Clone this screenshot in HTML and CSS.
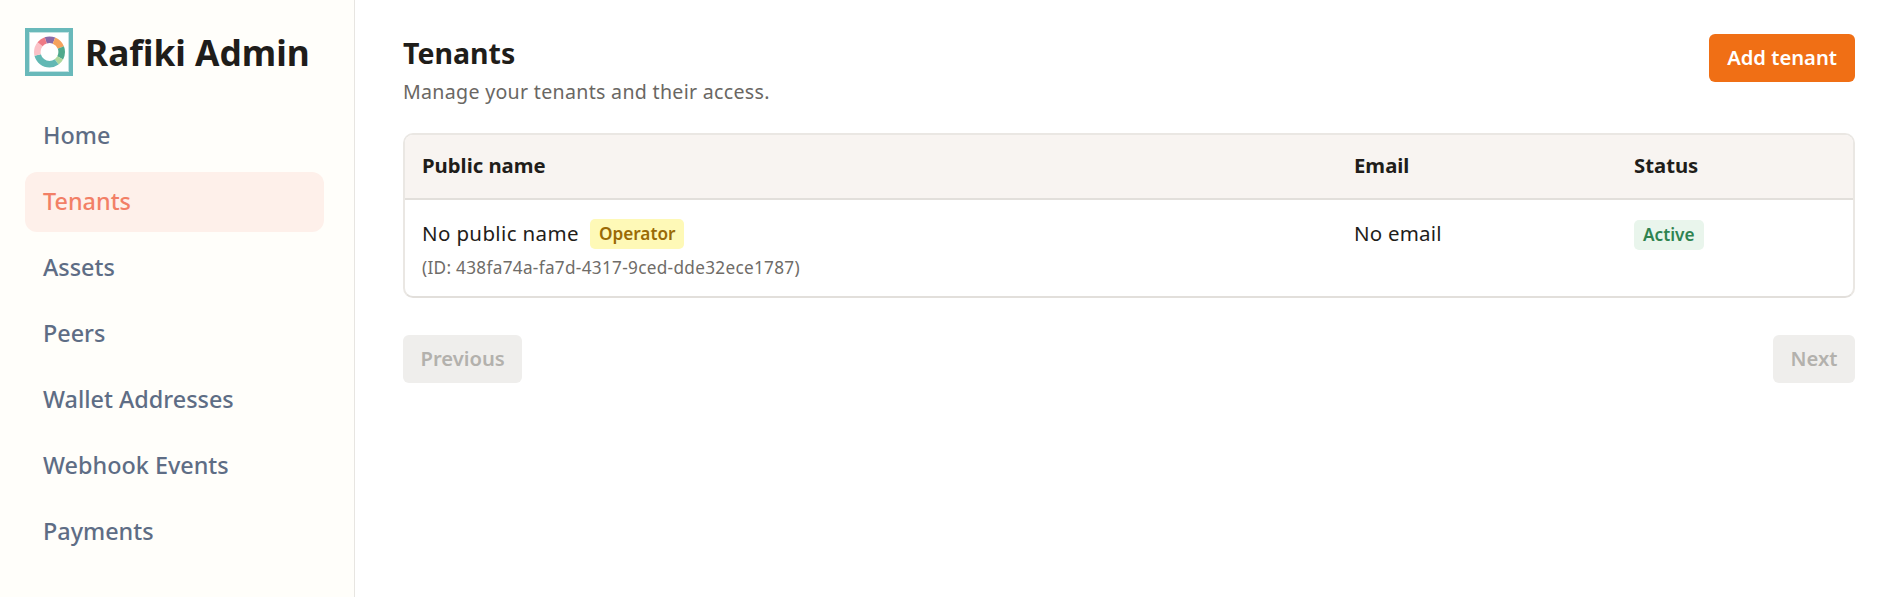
FILE: index.html
```html
<!DOCTYPE html>
<html lang="en">
<head>
<meta charset="utf-8">
<title>Rafiki Admin</title>
<link rel="stylesheet" href="styles.css">
</head>
<body>
<div class="app">
  <aside class="sidebar">
    <div class="brand">
      <svg class="logo" viewBox="0 0 48 48" aria-hidden="true">
        <rect x="2" y="2" width="44" height="44" fill="#fff" stroke="#69b9ba" stroke-width="4"/>
        <rect x="4.5" y="4.5" width="39" height="39" fill="none" stroke="#c4e3e3" stroke-width="1"/>
        <g fill="none" stroke-width="6.6" transform="rotate(-90 24.5 24)">
          <circle cx="24.5" cy="24" r="12.2" stroke="#8a6aa8" pathLength="100" stroke-dasharray="11 89" stroke-dashoffset="5"/>
          <circle cx="24.5" cy="24" r="12.2" stroke="#f5a25d" pathLength="100" stroke-dasharray="13 87" stroke-dashoffset="-6"/>
          <circle cx="24.5" cy="24" r="12.2" stroke="#4fa98c" pathLength="100" stroke-dasharray="14 86" stroke-dashoffset="-19"/>
          <circle cx="24.5" cy="24" r="12.2" stroke="#aed79c" pathLength="100" stroke-dasharray="7 93" stroke-dashoffset="-33"/>
          <circle cx="24.5" cy="24" r="12.2" stroke="#62b8b4" pathLength="100" stroke-dasharray="31 69" stroke-dashoffset="-40"/>
          <circle cx="24.5" cy="24" r="12.2" stroke="#fbc1c7" pathLength="100" stroke-dasharray="15 85" stroke-dashoffset="-71"/>
          <circle cx="24.5" cy="24" r="12.2" stroke="#ee7b86" pathLength="100" stroke-dasharray="9 91" stroke-dashoffset="-86"/>
        </g>
      </svg>
      <span class="brand-name">Rafiki Admin</span>
    </div>
    <nav class="nav">
      <a class="nav-item" href="#">Home</a>
      <a class="nav-item active" href="#">Tenants</a>
      <a class="nav-item" href="#">Assets</a>
      <a class="nav-item" href="#">Peers</a>
      <a class="nav-item" href="#">Wallet Addresses</a>
      <a class="nav-item" href="#">Webhook Events</a>
      <a class="nav-item" href="#">Payments</a>
    </nav>
  </aside>
  <main class="main">
    <header class="page-head">
      <div>
        <h1 class="title">Tenants</h1>
        <p class="subtitle">Manage your tenants and their access.</p>
      </div>
      <button class="btn primary" type="button">Add tenant</button>
    </header>
    <div class="table-card">
      <table class="table">
        <colgroup><col class="col-name"><col class="col-email"><col></colgroup>
        <thead>
          <tr><th>Public name</th><th>Email</th><th>Status</th></tr>
        </thead>
        <tbody>
          <tr>
            <td>
              <div class="name-line"><span class="name-text">No public name</span><span class="badge operator">Operator</span></div>
              <div class="tenant-id">(ID: 438fa74a-fa7d-4317-9ced-dde32ece1787)</div>
            </td>
            <td><div class="cell-line">No email</div></td>
            <td><span class="badge active-badge">Active</span></td>
          </tr>
        </tbody>
      </table>
    </div>
    <div class="pager">
      <button class="btn disabled" type="button">Previous</button>
      <button class="btn disabled" type="button">Next</button>
    </div>
  </main>
</div>
</body>
</html>
```
FILE: styles.css
```css
* { box-sizing: border-box; }
html, body { margin: 0; height: 100%; }
body {
  font-family: "Noto Sans", "Open Sans", sans-serif;
  color: #1f1d1a;
  background: #fff;
}
.app { display: flex; height: 597px; overflow: hidden; }
.sidebar {
  width: 355px;
  flex: none;
  background: #fffefa;
  border-right: 1px solid #e7e5e1;
  padding: 28px 30px 0 25px;
}
.brand { display: flex; align-items: center; gap: 12px; height: 48px; }
.logo { width: 48px; height: 48px; flex: none; }
.brand-name { font-size: 35.3px; font-weight: 700; line-height: 48px; }
.nav { display: flex; flex-direction: column; gap: 6px; margin-top: 30px; }
.nav-item {
  display: block;
  height: 60px;
  line-height: 58px;
  padding-left: 18px;
  border-radius: 12px;
  font-size: 23.4px;
  font-weight: 500;
  color: #5e6d85;
  text-decoration: none;
}
.nav-item.active { background: #fef0ea; color: #f27f66; }
.main { flex: 1; padding: 33px 44px 0 48px; min-width: 0; }
.page-head { display: flex; justify-content: space-between; align-items: flex-start; height: 100px; }
.title { margin: 0; font-size: 28.5px; font-weight: 700; line-height: 40px; }
.subtitle { margin: 5px 0 0; font-size: 19.6px; letter-spacing: 0.3px; line-height: 28px; color: #6a6763; }
.btn {
  font: inherit;
  font-size: 20.2px;
  font-weight: 600;
  height: 48px;
  padding: 0 18px 2px;
  border: 0;
  border-radius: 6px;
}
.btn.primary { background: #f06f15; color: #fff; margin-top: 1px; }
.btn.disabled { background: #efeeec; color: #b3b1ad; padding: 0 17.5px 2px; }
.table-card {
  border: 2px solid #eae7e3;
  border-bottom-color: #e2dfdb;
  border-radius: 10px;
  overflow: hidden;
  height: 165px;
}
.table { width: 100%; border-collapse: collapse; table-layout: fixed; }
.col-name { width: 932px; }
.col-email { width: 280px; }
th {
  background: #f8f4f1;
  border-bottom: 2px solid #e2dfdb;
  height: 64px;
  padding: 0 17px 3px;
  text-align: left;
  font-size: 20.3px;
  font-weight: 700;
}
td { padding: 19px 17px 0; vertical-align: top; font-size: 20.5px; font-weight: 400; }
.name-line { display: flex; align-items: center; gap: 11px; height: 30px; }
.name-text { padding-bottom: 2px; letter-spacing: 0.36px; }
.cell-line { height: 30px; line-height: 28px; letter-spacing: 0.2px; }
.tenant-id { margin-top: 7px; font-size: 17.2px; letter-spacing: 0.3px; line-height: 24px; color: #6f6c68; }
.badge {
  display: inline-block;
  height: 30px;
  line-height: 30px;
  padding: 0 9px;
  border-radius: 5px;
  font-size: 17.2px;
  font-weight: 600;
}
.operator { background: #fef9b7; color: #9a6a06; }
.active-badge { background: #e9f5ec; color: #2f8350; padding: 0 10px 0 9px; }
.pager { display: flex; justify-content: space-between; margin-top: 37px; }
```
